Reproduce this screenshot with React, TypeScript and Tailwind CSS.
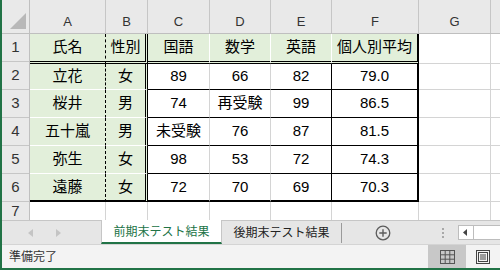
import React from 'react';

const font = "font-['Liberation_Sans','Noto_Sans_CJK_JP',sans-serif]";

const letters = ['A', 'B', 'C', 'D', 'E', 'F', 'G'];
const widths = ['w-[76px]', 'w-[42px]', 'w-[62px]', 'w-[61px]', 'w-[61px]', 'w-[87px]', 'w-[72px]'];
const heights = ['h-[30px]', 'h-[26px]', 'h-[28px]', 'h-[28px]', 'h-[28px]', 'h-[28px]'];

const rows = [
  ['氏名', '性別', '国語', '数学', '英語', '個人別平均'],
  ['立花', '女', '89', '66', '82', '79.0'],
  ['桜井', '男', '74', '再受験', '99', '86.5'],
  ['五十嵐', '男', '未受験', '76', '87', '81.5'],
  ['弥生', '女', '98', '53', '72', '74.3'],
  ['遠藤', '女', '72', '70', '69', '70.3'],
];

function cellCls(r: number, c: number) {
  const cls = ['flex items-center justify-center shrink-0', widths[c]];
  cls.push(r === 0 || c < 2 ? 'bg-[#e2efda]' : 'bg-white');

  if (c === 0) cls.push('border-r border-r-black [border-right-style:dashed]');
  else if (c === 1) cls.push('border-r-[3px] border-r-black [border-right-style:double]');
  else if (c === 5) cls.push('border-r-2 border-r-black');
  else if (r === 0) cls.push('border-r border-r-white');
  else if (c === 4) cls.push('border-r border-r-black');
  else cls.push('border-r border-r-[#d4d4d4]');

  if (r === 0) cls.push('border-b-[3px] border-b-black [border-bottom-style:double]');
  else if (r === 5) cls.push('border-b-2 border-b-black');
  else if (c < 2) cls.push('border-b border-b-white');
  else cls.push('border-b border-b-black');

  return cls.join(' ');
}

function Corner() {
  return (
    <svg width="27" height="33" viewBox="0 0 27 33">
      <polygon points="8,29 24,29 24,13" fill="#b8b8b8" />
    </svg>
  );
}

function PlusCircle() {
  return (
    <svg width="16" height="16" viewBox="0 0 16 16">
      <circle cx="8" cy="8" r="6.8" fill="none" stroke="#5c5c5c" strokeWidth="1.3" />
      <path d="M8 4.3v7.4M4.3 8h7.4" stroke="#5c5c5c" strokeWidth="1.4" />
    </svg>
  );
}

function GridIcon() {
  return (
    <svg width="15" height="14" viewBox="0 0 15 14">
      <rect x="0.5" y="0.5" width="14" height="13" fill="none" stroke="#555" />
      <path d="M5.2 0.5v13M9.8 0.5v13M0.5 4.8h14M0.5 9.2h14" stroke="#555" />
    </svg>
  );
}

function PageIcon() {
  return (
    <svg width="14" height="14" viewBox="0 0 14 14">
      <rect x="0.5" y="0.5" width="13" height="13" fill="none" stroke="#444" />
      <rect x="2.5" y="2.5" width="9" height="9" fill="none" stroke="#444" />
      <path d="M4 5h6M4 7h6M4 9h6" stroke="#444" />
    </svg>
  );
}

export default function App() {
  return (
    <div className={`${font} w-[500px] h-[270px] overflow-hidden flex flex-col border-l-2 border-l-[#217346] bg-white text-black`}>
      {/* column headers */}
      <div className="flex h-[34px] shrink-0 bg-[#e9e9e9] border-b border-b-[#bfbfbf] text-[13px] text-[#333]">
        <div className="w-[28px] shrink-0 border-r border-r-[#bfbfbf]">
          <Corner />
        </div>
        {letters.map((l, i) => (
          <div key={l} className={`${widths[i]} shrink-0 flex items-end justify-center pb-[4px] leading-[15px] border-r border-r-[#c6c6c6]`}>
            {l}
          </div>
        ))}
        <div className="flex-1" />
      </div>

      <div className="flex h-[186px] shrink-0 overflow-hidden">
        {/* row headers */}
        <div className="w-[28px] shrink-0 flex flex-col bg-[#e9e9e9] border-r border-r-[#bfbfbf] text-[15px] text-[#333]">
          {[1, 2, 3, 4, 5, 6].map((n) => (
            <div key={n} className="h-[28px] shrink-0 flex items-center justify-center border-b border-b-[#c6c6c6]">
              {n}
            </div>
          ))}
          <div className="h-[18px] shrink-0 flex items-center justify-center leading-[18px]">7</div>
        </div>

        {/* cells */}
        <div className="flex-1 flex flex-col text-[15px]">
          {rows.map((row, r) => (
            <div key={r} className={`flex ${heights[r]} shrink-0`}>
              {row.map((v, c) => (
                <div key={c} className={cellCls(r, c)}>
                  {v}
                </div>
              ))}
              <div className="w-[72px] shrink-0 border-r border-b border-[#d4d4d4]" />
              <div className="flex-1 border-b border-b-[#d4d4d4]" />
            </div>
          ))}
          <div className="flex h-[18px] shrink-0">
            {widths.map((w, i) => (
              <div key={i} className={`${w} shrink-0 border-r border-r-[#d4d4d4]`} />
            ))}
          </div>
        </div>
      </div>

      {/* sheet tabs */}
      <div className="flex h-[24px] shrink-0 bg-[#e6e6e6] text-[12px]">
        <div className="w-[99px] shrink-0 flex items-center border-t border-t-[#c6c6c6]">
          <svg className="ml-[26px]" width="5" height="8" viewBox="0 0 5 8">
            <polygon points="5,0 5,8 0,4" fill="#c4c4c4" />
          </svg>
          <svg className="ml-[23px]" width="5" height="8" viewBox="0 0 5 8">
            <polygon points="0,0 0,8 5,4" fill="#c4c4c4" />
          </svg>
        </div>
        <div className="w-[121px] shrink-0 flex items-center justify-center bg-white border-x border-x-[#c6c6c6] border-b-2 border-b-[#217346] text-[#217346] pt-[1px]">
          前期末テスト結果
        </div>
        <div className="flex-1 flex items-center border-t border-t-[#c6c6c6]">
          <div className="w-[119px] shrink-0 text-center text-[#222]">後期末テスト結果</div>
          <div className="w-px h-[20px] bg-[#9a9a9a]" />
          <div className="ml-[33px]">
            <PlusCircle />
          </div>
          <div className="ml-[51px] flex flex-col gap-[2px]">
            <span className="w-[2px] h-[2px] bg-[#a8a8a8]" />
            <span className="w-[2px] h-[2px] bg-[#a8a8a8]" />
            <span className="w-[2px] h-[2px] bg-[#a8a8a8]" />
          </div>
          <div className="ml-[14px] flex-1 h-[15px] flex items-center bg-white border-y border-l border-[#bdbdbd]">
            <svg className="ml-[4px]" width="4" height="7" viewBox="0 0 4 7">
              <polygon points="4,0 4,7 0,3.5" fill="#444" />
            </svg>
            <div className="ml-[6px] w-px h-full bg-[#bdbdbd]" />
          </div>
        </div>
      </div>

      {/* status bar */}
      <div className="flex h-[24px] shrink-0 items-stretch bg-[#f3f3f3] border-t border-t-[#d4d4d4] text-[12px] text-[#333]">
        <div className="flex-1 flex items-center pl-[7px]">準備完了</div>
        <div className="w-[38px] shrink-0 flex items-center justify-center bg-[#c8c8c8]">
          <GridIcon />
        </div>
        <div className="w-[34px] shrink-0 flex items-center justify-center">
          <PageIcon />
        </div>
      </div>
      <div className="h-[2px] shrink-0 bg-[#217346]" />
    </div>
  );
}
